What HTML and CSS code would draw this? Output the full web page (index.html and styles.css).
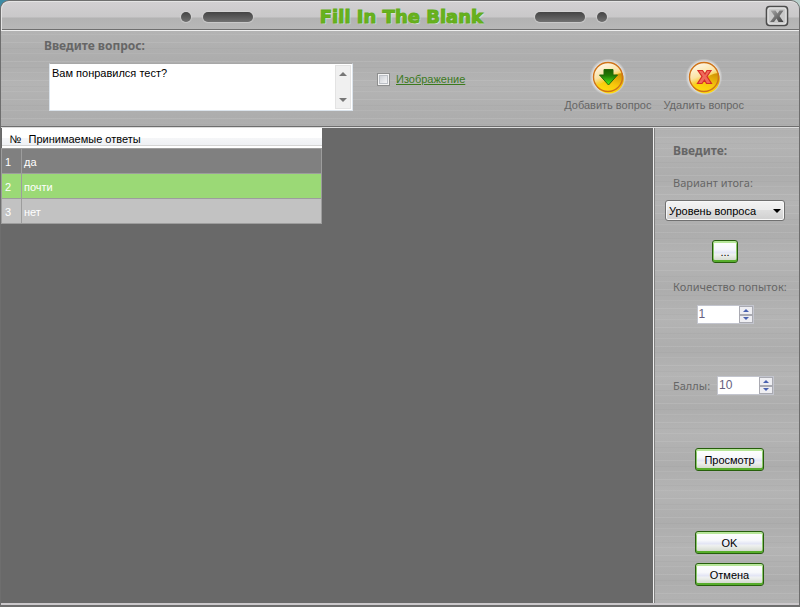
FILE: index.html
```html
<!DOCTYPE html>
<html lang="ru">
<head>
<meta charset="utf-8">
<title>Fill In The Blank</title>
<link rel="stylesheet" href="styles.css">
</head>
<body>
<div class="window">
  <header class="titlebar">
    <span class="vents"><i class="dot"></i><i class="slot"></i></span>
    <h1 class="title">Fill In The Blank</h1>
    <span class="vents"><i class="slot"></i><i class="dot"></i></span>
    <button class="close" type="button" aria-label="Закрыть">
      <svg width="24" height="22" viewBox="0 0 24 22">
        <defs><linearGradient id="steel" x1="0" y1="0" x2="1" y2="1"><stop offset="0" stop-color="#aaa"/><stop offset="1" stop-color="#3c3c3c"/></linearGradient></defs>
        <rect x="1.5" y="1.5" width="21" height="19" rx="3" fill="#c9c9c9" stroke="#4c4c4c" stroke-width="1.6"/>
        <rect x="3" y="3" width="18" height="16" rx="2" fill="none" stroke="#e9e9e9"/>
        <path d="M5.500 5.500H10.500L12.500 8.500L14.500 5.500H18.500L14.500 11L18.500 17H13.500L11.500 13.500L9 17H5L9.500 11Z" fill="url(#steel)"/>
      </svg>
    </button>
  </header>

  <section class="question">
    <div class="question-text">
      <label class="heading" for="question">Введите вопрос:</label>
      <div class="memo">
        <textarea id="question">Вам понравился тест?</textarea>
        <div class="scroll" aria-hidden="true">
          <svg width="8" height="4" viewBox="0 0 8 4"><path d="M0 4L4 0L8 4Z" fill="#777"/></svg>
          <svg width="8" height="4" viewBox="0 0 8 4"><path d="M0 0H8L4 4Z" fill="#777"/></svg>
        </div>
      </div>
    </div>
    <div class="image-option">
      <input type="checkbox" id="image" aria-label="Изображение">
      <a href="#image">Изображение</a>
    </div>
    <div class="actions">
      <button class="action" type="button">
        <svg width="38" height="38" viewBox="0 0 38 38">
          <defs>
            <linearGradient id="gold" x1="0.200" y1="0" x2="0.600" y2="1"><stop offset="0" stop-color="#fffaf0"/><stop offset="0.450" stop-color="#fbe3a4"/><stop offset="0.600" stop-color="#f9cf3a"/><stop offset="1" stop-color="#ffd91a"/></linearGradient>
            <linearGradient id="green" x1="0" y1="0" x2="0" y2="1"><stop offset="0" stop-color="#1d5c02"/><stop offset="0.400" stop-color="#237c05"/><stop offset="1" stop-color="#4df51c"/></linearGradient>
            <linearGradient id="amber" x1="1" y1="0" x2="0.500" y2="1"><stop offset="0" stop-color="#c98a04"/><stop offset="0.600" stop-color="#f8c80c"/><stop offset="1" stop-color="#ffdc10"/></linearGradient>
            <radialGradient id="halo"><stop offset="0.820" stop-color="#e6e6e6"/><stop offset="1" stop-color="#e0e0e0" stop-opacity="0"/></radialGradient>
          </defs>
          <circle cx="19" cy="19" r="18.500" fill="url(#halo)"/>
          <circle cx="19" cy="19" r="14.500" fill="url(#gold)"/>
          <path d="M33.500 15A14.500 14.500 0 0 1 7 27C16 26 21 16 33.500 15Z" fill="url(#amber)"/>
          <circle cx="19" cy="19" r="14.500" fill="none" stroke="#cf7419" stroke-width="1.400"/>
          <path d="M15 11.500H24V17H28.500L19.500 27L10.500 17H15Z" fill="url(#green)" stroke="#236b0b"/>
        </svg>
        <span>Добавить вопрос</span>
      </button>
      <button class="action" type="button">
        <svg width="38" height="38" viewBox="0 0 38 38">
          <circle cx="19" cy="19" r="18.500" fill="url(#halo)"/>
          <circle cx="19" cy="19" r="14.500" fill="url(#gold)"/>
          <path d="M33.500 15A14.500 14.500 0 0 1 7 27C16 26 21 16 33.500 15Z" fill="url(#amber)"/>
          <circle cx="19" cy="19" r="14.500" fill="none" stroke="#cf7419" stroke-width="1.400"/>
          <path d="M13 12.500H17.500L20 16L22 12.500H26L22 18.500L26.500 25.500H21.500L19.500 22L17 25.500H12.500L17 18.500Z" fill="#ef6a5c" stroke="#d52e26" stroke-width="1.200"/>
        </svg>
        <span>Удалить вопрос</span>
      </button>
    </div>
  </section>

  <main class="body">
    <div class="answers">
      <table>
        <thead><tr><th class="num">№</th><th>Принимаемые ответы</th></tr></thead>
        <tbody>
          <tr class="dark"><td>1</td><td>да</td></tr>
          <tr class="selected"><td>2</td><td>почти</td></tr>
          <tr class="light"><td>3</td><td>нет</td></tr>
        </tbody>
      </table>
    </div>
    <aside class="panel">
      <h2 class="heading">Введите:</h2>
      <label class="caption" for="result">Вариант итога:</label>
      <div class="select-box">
        <select id="result"><option>Уровень вопроса</option></select>
        <svg width="8" height="4" viewBox="0 0 8 4" aria-hidden="true"><path d="M0 0H8L4 4Z" fill="#000"/></svg>
      </div>
      <button class="btn more" type="button">...</button>
      <label class="caption" for="tries">Количество попыток:</label>
      <div class="spin tries">
        <input id="tries" type="number" value="1">
        <div class="steps">
          <button type="button" aria-label="Больше попыток"><svg width="6" height="3" viewBox="0 0 6 3"><path d="M0 3L3 0L6 3Z" fill="#4a62b0"/></svg></button>
          <button type="button" aria-label="Меньше попыток"><svg width="6" height="3" viewBox="0 0 6 3"><path d="M0 0H6L3 3Z" fill="#4a62b0"/></svg></button>
        </div>
      </div>
      <div class="points">
        <label class="caption" for="points">Баллы:</label>
        <div class="spin">
          <input id="points" type="number" value="10">
          <div class="steps">
            <button type="button" aria-label="Больше баллов"><svg width="6" height="3" viewBox="0 0 6 3"><path d="M0 3L3 0L6 3Z" fill="#4a62b0"/></svg></button>
            <button type="button" aria-label="Меньше баллов"><svg width="6" height="3" viewBox="0 0 6 3"><path d="M0 0H6L3 3Z" fill="#4a62b0"/></svg></button>
          </div>
        </div>
      </div>
      <div class="commands">
        <button class="btn" type="button">Просмотр</button>
        <div class="confirm">
          <button class="btn" type="button">OK</button>
          <button class="btn" type="button">Отмена</button>
        </div>
      </div>
    </aside>
  </main>
</div>
</body>
</html>
```
FILE: styles.css
```css
* { box-sizing: border-box; }

body {
  margin: 0;
  background: linear-gradient(90deg, #3d8ba5, #b9d0cc);
  font: 11px/14px "Liberation Sans", Arial, sans-serif;
  color: #000;
}

button, input, select, textarea { font: inherit; color: inherit; margin: 0; }
button { padding: 0; border: 0; background: none; }

.window {
  display: flex;
  flex-direction: column;
  min-height: 100vh;
  border: 1px solid #6e6e6e;
  border-bottom: 2px solid #6e6e6e;
  border-radius: 9px 9px 0 0;
  overflow: hidden;
  background:
    repeating-linear-gradient(#fff0 0 3px, #ffffff18 3px 4px, #fff0 4px 9px, #00000006 9px 10px, #fff0 10px 14px, #ffffff10 14px 15px, #fff0 15px 19px),
    repeating-linear-gradient(#adadad 0, #b4b4b4 26px, #adadad 58px);
}

.titlebar {
  position: relative;
  display: flex;
  align-items: center;
  justify-content: center;
  gap: 50px;
  height: 30px;
  padding: 1px 12px 0 0;
  border-top: 1px solid #e4e4e4;
  border-bottom: 1px solid #eee;
  border-radius: 8px 8px 0 0;
  background: linear-gradient(#d2d0d2, #c9c8c9 15px, #b2b2b2 16px, #b8b8b8 27px, #6f6f6f 27px);
  box-shadow: inset 1px 0 #e4e4e4;
}
.vents { display: flex; align-items: center; gap: 12px; }
.dot, .slot {
  height: 10px;
  border-radius: 5px;
  background: linear-gradient(#444, #707070);
  box-shadow: 0 0 1px 1px #ddd8;
}
.dot { width: 10px; }
.slot { width: 50px; }
.title {
  margin: 0;
  width: 182px;
  padding-right: 2px;
  text-align: right;
  white-space: nowrap;
  font: bold 18px/24px "DejaVu Sans", Verdana, sans-serif;
  color: #68b31d;
  -webkit-text-stroke: 1px #62ac1b;
  text-shadow: 1px 1px 1px #e6efe0;
}
.close { position: absolute; right: 10px; top: 3px; width: 24px; height: 22px; }
.close svg { display: block; }

.question {
  display: flex;
  align-items: flex-start;
  height: 96px;
  padding: 8px 55px 0 43px;
  border-bottom: 1px solid #6e6e6e;
}
.question-text { flex: none; width: 309px; }
.heading {
  display: block;
  margin: 0;
  font: bold 12px/14px "Noto Sans", Tahoma, sans-serif;
  color: #666;
}
.memo {
  display: flex;
  height: 48px;
  margin: 10px 0 0 5px;
  padding: 1px;
  border: 1px solid #dce4ec;
  border-top-color: #a7a7a7;
  background: #fff;
}
.memo textarea {
  flex: 1;
  min-width: 0;
  padding: 1px;
  border: 0;
  resize: none;
  background: none;
  outline: 0;
  overflow: hidden;
}
.scroll {
  display: flex;
  flex-direction: column;
  align-items: center;
  justify-content: space-between;
  width: 16px;
  padding: 6px 0;
  border: 1px solid #e3e3e3;
  background: #f0f0f0;
}
.image-option { display: flex; align-items: center; gap: 6px; margin: 33px 0 0 24px; }
.image-option input {
  appearance: none;
  width: 13px;
  height: 13px;
  border: 1px solid #8e8f8f;
  background: linear-gradient(135deg, #c4c8ce, #fff);
  box-shadow: inset 0 0 0 1px #f4f4f4, inset 0 0 0 2px #bcc0c6;
}
.image-option a { color: #3b7a1d; text-decoration: underline; }
.actions { display: flex; gap: 12px; margin: 19px 0 0 auto; }
.action { display: flex; flex-direction: column; align-items: center; gap: 2px; color: #666; white-space: nowrap; }

.body { display: flex; flex: 1; border-top: 1px solid #ddd; border-bottom: 2px solid #cbc8cb; }
.answers { flex: 1; min-width: 0; background: #696969; }

table { width: 321px; border-collapse: collapse; table-layout: fixed; }
th {
  height: 20px;
  padding: 2px 7px 0;
  text-align: left;
  font-weight: normal;
  background: linear-gradient(#fff 50%, #f5f6f8 50%, #eff1f4 17px, #d5d5d5 17px, #d5d5d5 18px, #fff 18px);
  white-space: nowrap;
  overflow: hidden;
}
th.num { width: 20px; padding: 2px 0 0 8px; }
td { height: 25px; padding: 3px 2px 0; border: 1px solid #9d9d9d; color: #fff; }
td:first-child { padding-left: 3px; }
.dark td { background: #808080; }
.selected td { background: #9bd976; }
.light td { background: #c2c2c2; }

.panel {
  display: flex;
  flex-direction: column;
  flex: none;
  width: 146px;
  padding: 16px 14px 17px 11px;
  border-left: 1px solid #eee;
  box-shadow: inset 1px 0 #808080;
}
.panel .heading { margin-left: 8px; }
.caption { color: #666; white-space: nowrap; font-family: "Noto Sans", Tahoma, sans-serif; }
.panel > .caption { margin: 18px 0 0 8px; }
.select-box { display: grid; align-items: center; margin-top: 10px; }
.select-box select {
  grid-area: 1 / 1;
  appearance: none;
  height: 21px;
  padding: 0 3px;
  border: 1px solid #707070;
  border-radius: 3px;
  background: linear-gradient(#f3f3f3, #ebebeb 50%, #dedede 50%, #d0d0d0);
  box-shadow: inset 0 0 0 1px #f8f8f8;
}
.select-box svg { grid-area: 1 / 1; justify-self: end; margin-right: 4px; pointer-events: none; }
.btn {
  flex: none;
  width: 69px;
  height: 23px;
  border: 1px solid #265e0c;
  border-radius: 3px;
  background: linear-gradient(#fff, #f7f8fb 40%, #e4e6f5 55%, #eef0ef 65%, #ccd3c4);
  box-shadow: inset 0 2px #b7e69a, inset 0 -2px #57ad2c, inset 1px 0 #8cc86c, inset -1px 0 #8cc86c;
}
.more { align-self: center; width: 26px; margin-top: 19px; }
.panel > .more + .caption { margin-top: 17px; }
.spin {
  display: flex;
  flex: none;
  width: 57px;
  height: 19px;
  border: 1px solid #c3c5ce;
  background: #fff;
}
.spin input {
  appearance: textfield;
  flex: 1;
  min-width: 0;
  padding: 0 1px 2px;
  border: 0;
  outline: 0;
  background: none;
  font-size: 12px;
  color: #666080;
}
.spin input::-webkit-inner-spin-button { appearance: none; }
.steps { display: flex; flex-direction: column; width: 14px; }
.steps button {
  display: flex;
  flex: 1;
  align-items: center;
  justify-content: center;
  border: 1px solid #a9aab2;
  background: #eeeef2;
}
.tries { align-self: center; margin-top: 11px; }
.points { display: flex; align-items: center; gap: 7px; margin: 52px 0 0 8px; }
.commands {
  display: flex;
  flex: 1;
  flex-direction: column;
  justify-content: space-between;
  align-self: flex-end;
  margin: 53px 21px 0 0;
}
.confirm { display: flex; flex-direction: column; gap: 9px; }
```
